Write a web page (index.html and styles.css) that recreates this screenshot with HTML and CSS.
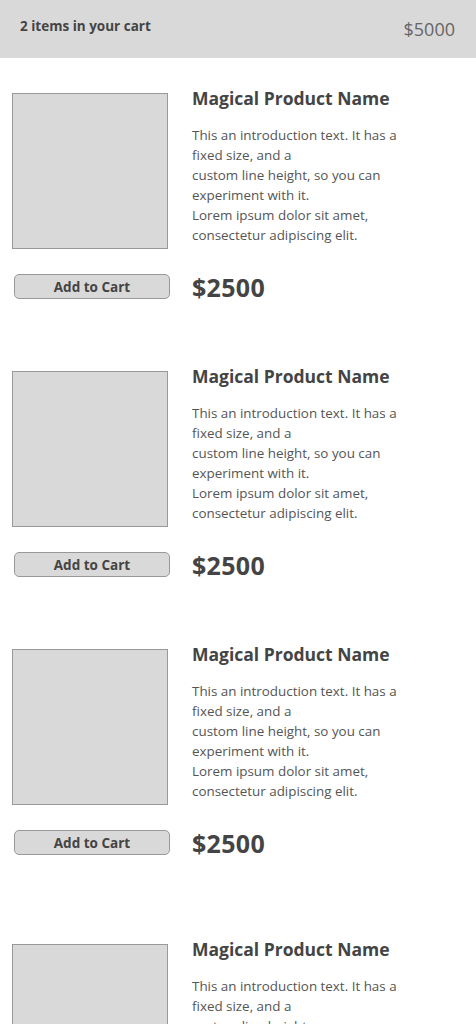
FILE: index.html
```html
<!DOCTYPE html>
<html lang="en">
<head>
<meta charset="utf-8">
<title>Cart</title>
<link rel="stylesheet" href="styles.css">
</head>
<body>
<header class="cart-bar">
  <span class="cart-count">2 items in your cart</span>
  <span class="cart-total">$5000</span>
</header>
<main class="product-list">
  <article class="product">
    <div class="product-image"></div>
    <div class="product-info">
      <h2 class="product-name">Magical Product Name</h2>
      <p class="product-desc">This an introduction text. It has a<br>fixed size, and a<br>custom line height, so you can<br>experiment with it.<br>Lorem ipsum dolor sit amet,<br>consectetur adipiscing elit.</p>
    </div>
    <button class="add-btn">Add to Cart</button>
    <div class="product-price">$2500</div>
  </article>
  <article class="product">
    <div class="product-image"></div>
    <div class="product-info">
      <h2 class="product-name">Magical Product Name</h2>
      <p class="product-desc">This an introduction text. It has a<br>fixed size, and a<br>custom line height, so you can<br>experiment with it.<br>Lorem ipsum dolor sit amet,<br>consectetur adipiscing elit.</p>
    </div>
    <button class="add-btn">Add to Cart</button>
    <div class="product-price">$2500</div>
  </article>
  <article class="product">
    <div class="product-image"></div>
    <div class="product-info">
      <h2 class="product-name">Magical Product Name</h2>
      <p class="product-desc">This an introduction text. It has a<br>fixed size, and a<br>custom line height, so you can<br>experiment with it.<br>Lorem ipsum dolor sit amet,<br>consectetur adipiscing elit.</p>
    </div>
    <button class="add-btn">Add to Cart</button>
    <div class="product-price">$2500</div>
  </article>
  <article class="product product-spaced">
    <div class="product-image"></div>
    <div class="product-info">
      <h2 class="product-name">Magical Product Name</h2>
      <p class="product-desc">This an introduction text. It has a<br>fixed size, and a<br>custom line height, so you can<br>experiment with it.<br>Lorem ipsum dolor sit amet,<br>consectetur adipiscing elit.</p>
    </div>
    <button class="add-btn">Add to Cart</button>
    <div class="product-price">$2500</div>
  </article>
</main>
</body>
</html>
```
FILE: styles.css
```css
* { box-sizing: border-box; }
html, body { margin: 0; padding: 0; background: #fff; }
body {
  font-family: "Open Sans", Lato, sans-serif;
  color: #444;
  width: 476px;
  height: 1024px;
  overflow: hidden;
}
.cart-bar {
  height: 58px;
  background: #d9d9d9;
  display: flex;
  justify-content: space-between;
  align-items: flex-start;
  padding: 0 21px 0 20px;
}
.cart-count {
  font-size: 13.5px;
  font-weight: 700;
  color: #444;
  line-height: 16px;
  margin-top: 18px;
}
.cart-total {
  font-size: 18px;
  font-weight: 400;
  color: #666;
  line-height: 22px;
  margin-top: 18px;
}
.product-list {
  display: flex;
  flex-direction: column;
  gap: 72px;
  padding: 35px 0 0 12px;
}
.product {
  display: grid;
  grid-template-columns: 156px 1fr;
  column-gap: 24px;
  row-gap: 25px;
}
.product-spaced { margin-top: 17px; }
.product-image {
  width: 156px;
  height: 156px;
  background: #d9d9d9;
  border: 1px solid #999;
}
.product-info {
  margin-top: -7px;
}
.product-name {
  margin: 0;
  font-size: 17.5px;
  line-height: 24px;
  font-weight: 700;
  color: #444;
}
.product-desc {
  margin: 15px 0 0;
  font-size: 13.4px;
  line-height: 20px;
  color: #555;
  white-space: nowrap;
}
.add-btn {
  margin-left: 2px;
  width: 156px;
  height: 25px;
  border: 1px solid #999;
  border-radius: 5px;
  background: #d9d9d9;
  font-family: "Open Sans", Lato, sans-serif;
  font-size: 13.5px;
  font-weight: 700;
  color: #444;
  padding: 2px 0 0;
  line-height: 21px;
  text-align: center;
}
.product-price {
  font-size: 25px;
  font-weight: 700;
  line-height: 23px;
  padding-top: 2px;
  letter-spacing: 0.3px;
  color: #444;
}
```
